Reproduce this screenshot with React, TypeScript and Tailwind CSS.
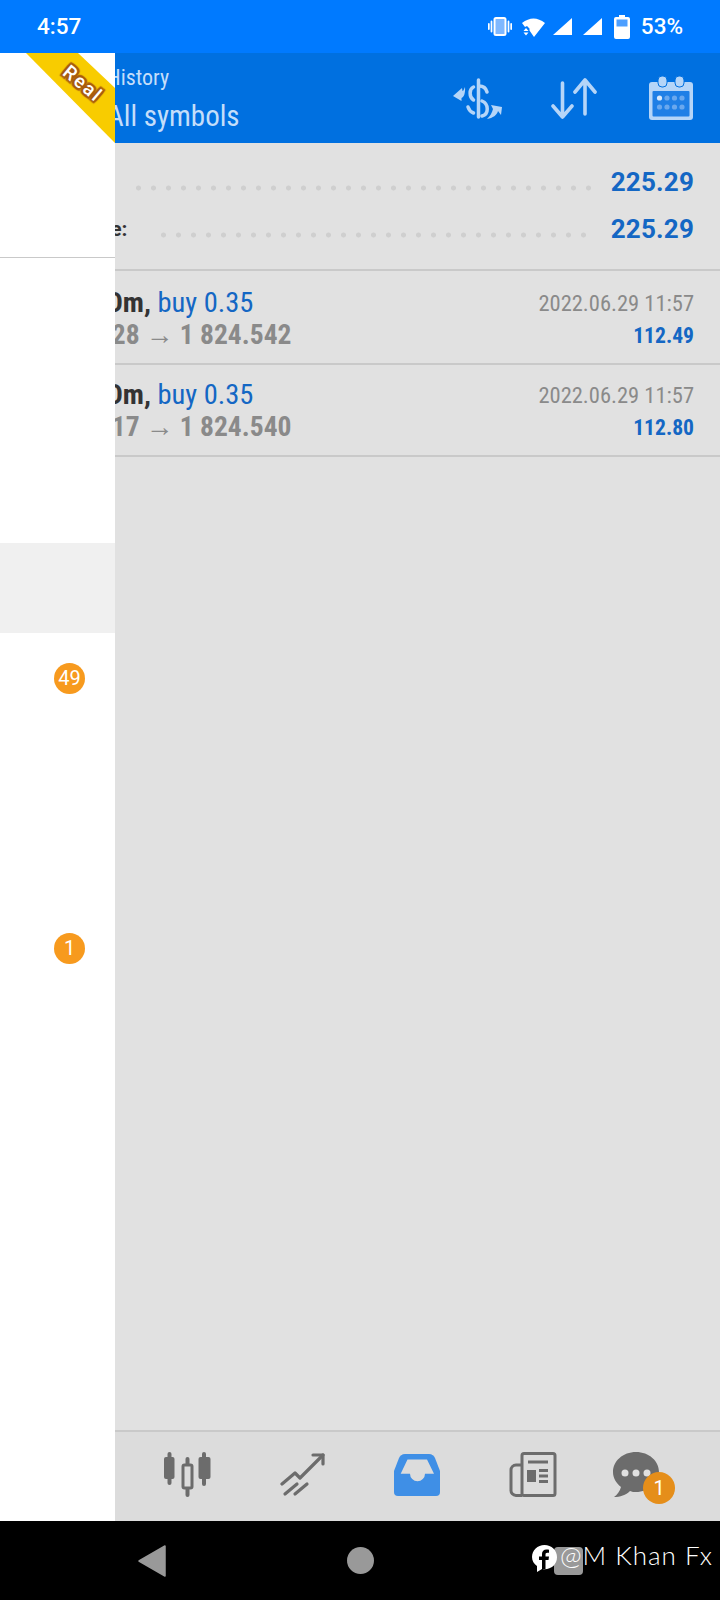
const CONDENSED = "font-['Roboto','Liberation_Sans_Narrow',sans-serif] [font-stretch:condensed]";

const drawerRows = [
  { id: 1 },
  { id: 2 },
  { id: 3 },
  { id: 4, active: true },
  { id: 5, badge: "49" },
  { id: 6 },
  { id: 7 },
  { id: 8, badge: "1" },
  { id: 9 },
  { id: 10 },
  { id: 11 },
];

const deals = [
  { open: "1 824.128", close: "1 824.542", profit: "112.49" },
  { open: "1 824.117", close: "1 824.540", profit: "112.80" },
];

function SummaryRow({ label, dotsClass }: { label: string; dotsClass: string }) {
  return (
    <div className="flex h-[47px] items-center">
      <span className="ml-[20px] text-[21px] font-bold text-[#333]">{label}</span>
      <div
        className={`mt-[10px] h-[6px] bg-[radial-gradient(circle,#cfcfcf_2.2px,transparent_2.8px)] bg-[length:15px_6px] bg-repeat-x ${dotsClass}`}
      />
      <span className="ml-auto text-[26px] font-bold tracking-[0.2px] text-[#1467c4]">225.29</span>
    </div>
  );
}

function DealRow({ open, close, profit }: { open: string; close: string; profit: string }) {
  return (
    <div className="flex h-[92px] justify-between border-b-2 border-[#c9c9c9] px-[26px] pt-[13px] first:h-[94px] first:pt-[15px]">
      <div className={CONDENSED}>
        <div className="h-[32px] text-[28.5px] leading-[33px]">
          <span className="font-bold text-[#333]">XAUUSDm,</span>
          <span className="text-[#1467c4]"> buy 0.35</span>
        </div>
        <div className="ml-[2px] h-[33px] text-[27.5px] font-bold leading-[33px] text-[#8a8a8a]">
          {open} → {close}
        </div>
      </div>
      <div className={`text-right ${CONDENSED}`}>
        <div className="h-[33px] pt-[1px] text-[22.5px] leading-[33px] text-[#8a8a8a]">2022.06.29 11:57</div>
        <div className="h-[33px] text-[21.6px] font-bold leading-[33px] text-[#1467c4]">{profit}</div>
      </div>
    </div>
  );
}

function StatusIcons() {
  return (
    <div className="flex items-center">
      <svg width="24" height="19" viewBox="0 0 24 19" className="mr-[10px]">
        <rect x="6.500" y="1" width="11" height="17" rx="1.500" fill="#7fb8ff" stroke="#fff" strokeWidth="2" />
        <path d="M3.500 4.500v10M0.800 7v5M20.500 4.500v10M23.200 7v5" stroke="#fff" strokeWidth="1.800" strokeLinecap="round" />
      </svg>
      <svg width="23" height="20" viewBox="0 0 23 20" className="mr-[8px]">
        <path d="M0 6Q11.500-3 23 6L12 20 7.500 13.500V11.500L5 9 3 10Z" fill="#fff" />
        <path d="M1.500 14 4 11 6.500 14ZM1.500 15.500H6.500L4 18.500Z" fill="#fff" />
      </svg>
      <svg width="19" height="17" viewBox="0 0 19 17" className="mr-[11px]">
        <path d="M0 17 19 0V17Z" fill="#fff" />
      </svg>
      <svg width="19" height="17" viewBox="0 0 19 17" className="mr-[12px]">
        <path d="M0 17 19 0V17Z" fill="#fff" />
      </svg>
      <svg width="16" height="24" viewBox="0 0 16 24" className="mr-[11px]">
        <path d="M5 0h6v2h3a2 2 0 0 1 2 2v18a2 2 0 0 1-2 2H2a2 2 0 0 1-2-2V4a2 2 0 0 1 2-2h3Z" fill="#fff" />
        <rect x="2.500" y="4.500" width="11" height="7" fill="#4d9fff" />
      </svg>
      <span className="text-[22.5px] font-medium text-white">53%</span>
    </div>
  );
}

function ExchangeIcon() {
  return (
    <svg width="49" height="41" viewBox="0 0 49 41" fill="none" stroke="#b5d5f8" strokeWidth="3.500" strokeLinecap="round">
      <path d="M25.500 2v37" />
      <path d="M26 8C31 8 33 10 34 14" />
      <path d="M20.500 9C16 11 16 19 20.500 22" />
      <path d="M29 23C36 26 36 36 29 38" />
      <path d="M15 29C16 32 17.500 34 20.500 35" />
      <path d="M0 18 9 10 9.500 13C10.500 13 11 11 12 9 12.500 15 11 19 8.500 20V23Z" fill="#b5d5f8" stroke="none" />
      <path d="M49 29 38 27 40 31C39 35 37 38 34 41 40 40 44 37 45 33L48 37Z" fill="#b5d5f8" stroke="none" />
    </svg>
  );
}

function SortIcon() {
  return (
    <svg width="46" height="41" viewBox="0 0 46 41" fill="none" stroke="#b5d5f8" strokeWidth="3.600" strokeLinecap="round" strokeLinejoin="round">
      <path d="M11.500 5v34M2 28l9.500 11L21 28" />
      <path d="M34 36V2M24 14 34 2l10 12" />
    </svg>
  );
}

function CalendarIcon() {
  const dots = [0, 1, 2, 3];
  return (
    <svg width="44" height="44" viewBox="0 0 44 44">
      <path d="M3 6h38a3 3 0 0 1 3 3v32a3 3 0 0 1-3 3H3a3 3 0 0 1-3-3V9a3 3 0 0 1 3-3Z" fill="#b5d5f8" />
      <rect x="3.500" y="15" width="37" height="25.500" rx="1" fill="#1f7fe6" />
      <rect x="9" y="0" width="9" height="11" rx="4" fill="#b5d5f8" stroke="#0070e0" strokeWidth="1" />
      <rect x="26" y="0" width="9" height="11" rx="4" fill="#b5d5f8" stroke="#0070e0" strokeWidth="1" />
      {dots.map((d) => (
        <circle key={d} cx={10.500 + d * 7.500} cy="22" r="2.600" fill={d === 0 ? "#d9e9fb" : "#6aa8ee"} />
      ))}
      {dots.map((d) => (
        <circle key={d} cx={10.500 + d * 7.500} cy="31" r="2.600" fill="#6aa8ee" />
      ))}
    </svg>
  );
}

function CandlesIcon() {
  return (
    <svg width="49" height="46" viewBox="0 0 49 46" fill="#6c6c6c">
      <rect x="4.500" y="0" width="4" height="33" rx="2" />
      <rect x="1" y="5" width="10.500" height="22" rx="2" />
      <rect x="39" y="0" width="4" height="34" rx="2" />
      <rect x="35.500" y="5" width="12" height="22" rx="2" />
      <rect x="22.500" y="5" width="4" height="40" rx="2" />
      <rect x="20" y="13" width="9" height="23" rx="1.500" fill="#dcdcdc" stroke="#6c6c6c" strokeWidth="3" />
    </svg>
  );
}

function TrendIcon() {
  return (
    <svg width="46" height="44" viewBox="0 0 46 44" fill="none" stroke="#6c6c6c" strokeWidth="3.200" strokeLinecap="round" strokeLinejoin="round">
      <path d="M2 31 15 20l5 5L43 2" />
      <path d="M33 2H43V11" />
      <path d="M5 41 17 31" />
      <path d="M15 41 27 31" />
    </svg>
  );
}

function InboxIcon() {
  return (
    <svg width="46" height="42" viewBox="0 0 46 42">
      <path d="M11 0H35C38 0 40 2 41 4L46 17V38A4 4 0 0 1 42 42H4A4 4 0 0 1 0 38V17L5 4C6 2 8 0 11 0Z" fill="#3f8fe6" />
      <path d="M13.500 5.500H33L40 19.700H31A7.500 7.500 0 0 1 16 19.700H6.700Z" fill="#dcdcdc" />
    </svg>
  );
}

function NewsIcon() {
  return (
    <svg width="48" height="45" viewBox="0 0 48 45" fill="none" stroke="#6c6c6c" strokeWidth="3">
      <rect x="13" y="1.500" width="33" height="42" rx="2" />
      <path d="M13 13H7a5 5 0 0 0-5 5v20a5 5 0 0 0 5 5.500h6" />
      <path d="M19 10H39" />
      <rect x="18" y="18" width="9" height="12" fill="#6c6c6c" stroke="none" />
      <path d="M30 18.500H39M30 24H39M30 29.500H39" />
    </svg>
  );
}

function ChatIcon() {
  return (
    <svg width="46" height="46" viewBox="0 0 46 46">
      <path d="M23 0c13 0 23 9 23 20s-10 20-23 20c-2 0-4 0-6-1-4 4-10 6-16 6 3-2 6-6 7-10C3 31 0 26 0 20 0 9 10 0 23 0Z" fill="#6c6c6c" />
      <circle cx="12" cy="21" r="3.500" fill="#e0e0e0" />
      <circle cx="23" cy="21" r="3.500" fill="#e0e0e0" />
      <circle cx="34" cy="21" r="3.500" fill="#e0e0e0" />
    </svg>
  );
}

function Drawer() {
  return (
    <aside className="absolute bottom-0 left-0 top-0 flex w-[115px] flex-col overflow-hidden bg-white">
      <div className="relative h-[205px] shrink-0 border-b border-[#c9c9c9]">
        <svg width="115" height="90" viewBox="0 0 115 90" className="absolute left-0 top-0">
          <path d="M26 0H78L115 35V90Z" fill="#f8cc00" />
        </svg>
        <span className="absolute left-[60px] top-[20px] rotate-[40deg] text-[19px] font-medium leading-[22px] tracking-[2px] text-white [text-shadow:0_0_2px_#a85c10,2px_2px_1px_#a85c10,-2px_-2px_1px_#a85c10,2px_-2px_1px_#a85c10,-2px_2px_1px_#a85c10,2px_0_1px_#a85c10,-2px_0_1px_#a85c10,0_2px_1px_#a85c10,0_-2px_1px_#a85c10]">
          Real
        </span>
      </div>
      <div className="pt-[15px]">
        {drawerRows.map((row) => (
          <div
            key={row.id}
            className={`flex h-[90px] items-center pl-[54px] ${row.active ? "bg-[#f0f0f0]" : ""}`}
          >
            {row.badge && (
              <span className="flex h-[31px] w-[31px] items-center justify-center rounded-full bg-[#f79a1e] text-[20px] text-white">
                {row.badge}
              </span>
            )}
          </div>
        ))}
      </div>
    </aside>
  );
}

export default function App() {
  return (
    <div className="flex h-[1600px] w-[720px] flex-col overflow-hidden bg-black font-['Roboto',sans-serif]">
      <div className="flex h-[53px] shrink-0 items-center justify-between bg-[#007aff] px-[37px]">
        <span className="text-[22.5px] font-medium text-white">4:57</span>
        <StatusIcons />
      </div>

      <div className="relative flex min-h-0 flex-1 flex-col bg-[#e1e1e1]">
        <header className="flex h-[90px] shrink-0 items-center justify-between bg-[#0070e0] pl-[107px] pr-[27px]">
          <div className={`pt-[10px] text-[#c4defa] ${CONDENSED}`}>
            <div className="text-[22px] leading-[26px]">History</div>
            <div className="text-[29px] leading-[50px]">All symbols</div>
          </div>
          <div className="flex items-center">
            <ExchangeIcon />
            <div className="ml-[49px]">
              <SortIcon />
            </div>
            <div className="ml-[52px]">
              <CalendarIcon />
            </div>
          </div>
        </header>

        <main className="flex-1">
          <section className="h-[128px] border-b-2 border-[#c9c9c9] px-[26px] pt-[16px]">
            <SummaryRow label="Profit:" dotsClass="ml-[26px] w-[465px]" />
            <SummaryRow label="Balance:" dotsClass="ml-[29px] w-[435px]" />
          </section>
          <div>
            {deals.map((deal) => (
              <DealRow key={deal.profit} {...deal} />
            ))}
          </div>
        </main>

        <nav className="flex h-[91px] shrink-0 items-center border-t-2 border-[#c9c9c9] bg-[#dcdcdc] pb-[4px] pl-[163px]">
          <CandlesIcon />
          <div className="ml-[68px]">
            <TrendIcon />
          </div>
          <div className="ml-[68px]">
            <InboxIcon />
          </div>
          <div className="ml-[69px]">
            <NewsIcon />
          </div>
          <div className="relative ml-[56px]">
            <ChatIcon />
            <span className="absolute left-[30px] top-[20px] flex h-[32px] w-[32px] items-center justify-center rounded-full bg-[#e58e1a] text-[20px] text-white">
              1
            </span>
          </div>
        </nav>

        <Drawer />
      </div>

      <div className="relative flex h-[79px] shrink-0 items-center bg-black pl-[138px]">
        <svg width="28" height="32" viewBox="0 0 28 32">
          <path d="M1 16 27 1V31Z" fill="#999" stroke="#999" strokeWidth="1.500" strokeLinejoin="round" />
        </svg>
        <div className="ml-[181px] h-[27px] w-[27px] rounded-full bg-[#999]" />
        <div className="ml-[180px] h-[28px] w-[29px] rounded-sm bg-[#999]" />
        <div className="absolute left-[532px] top-[24px] flex items-center">
          <svg width="25" height="28" viewBox="0 0 25 28">
            <path d="M12.500 0C5.500 0 0 5 0 12c0 4 2 7 5 9v6l5-3c1 0 2 .3 2.500 .3 7 0 12.500-5 12.500-12S19.500 0 12.500 0Z" fill="#fff" />
            <path d="M13.500 24v-9h3l.5-3.500h-3.500V9.500c0-1 .5-1.700 1.800-1.700H17V4.700c-.5 0-1.500-.2-2.500-.2-2.700 0-4.500 1.600-4.500 4.500v2.500H7V15h3v9Z" fill="#000" />
          </svg>
          <span className="-mt-[8px] ml-[3px] font-['Lato',sans-serif] text-[26px] font-light leading-none tracking-[1px] text-white">
            @M Khan Fx
          </span>
        </div>
      </div>
    </div>
  );
}
